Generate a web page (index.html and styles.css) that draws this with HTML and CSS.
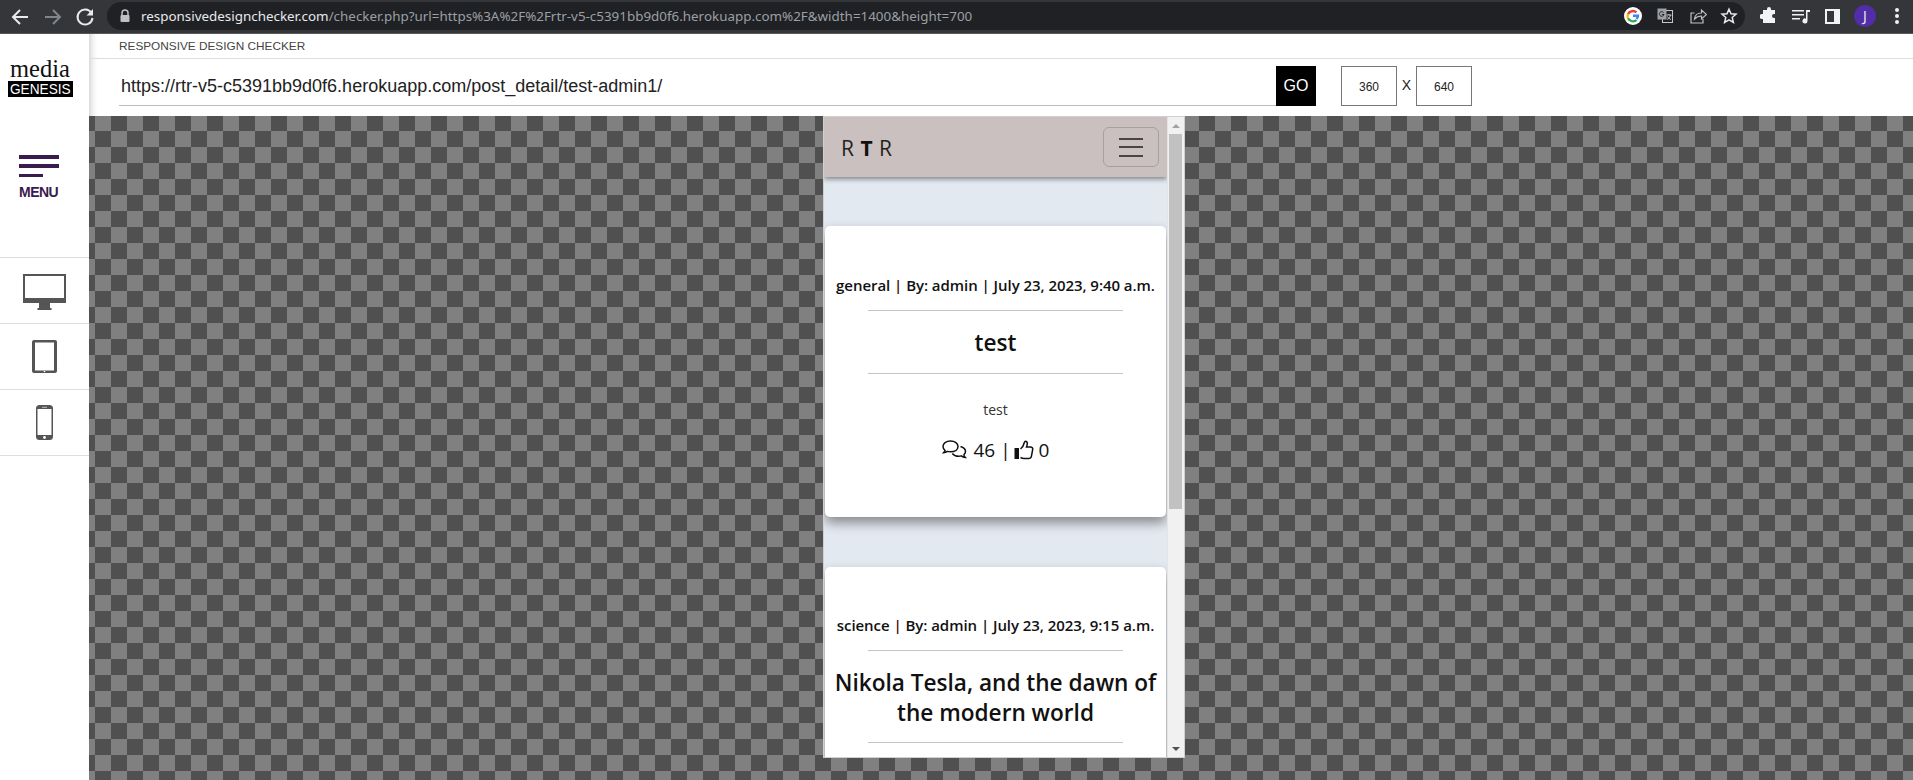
FILE: index.html
```html
<!DOCTYPE html>
<html lang="en">
<head>
<meta charset="utf-8">
<title>Responsive Design Checker</title>
<link rel="stylesheet" href="styles.css">
</head>
<body>
<header class="chrome">
  <svg class="nav-ico" width="24" height="24" viewBox="0 0 24 24"><path d="M20 12H6M12 5l-7 7 7 7" fill="none" stroke="#e8eaed" stroke-width="2"/></svg>
  <svg class="nav-ico fwd" width="24" height="24" viewBox="0 0 24 24"><path d="M4 12h14M12 5l7 7-7 7" fill="none" stroke="#80868b" stroke-width="2"/></svg>
  <svg class="nav-ico rel" width="24" height="24" viewBox="0 0 24 24"><path d="M18.4 8A7.5 7.5 0 1 0 19.5 13" fill="none" stroke="#e8eaed" stroke-width="2"/><path d="M20 4v6.500h-6.500z" fill="#e8eaed"/></svg>
  <div class="omnibox">
    <svg class="lock" width="12" height="14" viewBox="0 0 12 14"><path d="M3 6V4a3 3 0 0 1 6 0v2" fill="none" stroke="#bdc1c6" stroke-width="1.500"/><rect x="1.500" y="6" width="9" height="7" rx="1" fill="#bdc1c6"/></svg>
    <div class="url"><span class="host">responsivedesignchecker.com</span>/checker.php?url=https%3A%2F%2Frtr-v5-c5391bb9d0f6.herokuapp.com%2F&amp;width=1400&amp;height=700</div>
    <svg class="omni-ico" width="18" height="18" viewBox="0 0 18 18"><circle cx="9" cy="9" r="9" fill="#fff"/><path d="M9 7.500h6.200a6.300 6.300 0 0 1-1.700 5.300l-2-1.600A3.500 3.500 0 0 0 12.400 10H9z" fill="#4285f4"/><path d="M4.900 10.600a4.300 4.300 0 0 0 6.600 1.600l2 1.600A6.700 6.700 0 0 1 3 11.700z" fill="#34a853"/><path d="M3 6.300l2 1.500a4.300 4.300 0 0 0-.1 2.800L3 11.700a6.700 6.700 0 0 1 0-5.400z" fill="#fbbc05"/><path d="M3 6.300a6.700 6.700 0 0 1 10.300-1.800l-1.800 1.700A4.300 4.300 0 0 0 5 7.800z" fill="#ea4335"/></svg>
    <svg class="omni-ico tr" width="16" height="16" viewBox="0 0 16 16"><rect x="5.500" y="2.500" width="10" height="12" fill="#202124" stroke="#c4c7c5"/><rect x="0.500" y="0.500" width="9" height="11" fill="#9aa0a6"/><path d="M6.500 4.500a2.300 2.300 0 1 0 .5 2H5" fill="none" stroke="#202124"/><path d="M9.500 7h5M12 6v1M13.500 7c-.5 2-2 4-3.500 4.500M10.500 8.500c.5 1.200 2 2.500 3.500 3" fill="none" stroke="#e8eaed" stroke-width=".8"/></svg>
    <svg class="omni-ico sh" width="18" height="18" viewBox="0 0 18 18"><path d="M5.500 6H2v10h12v-4" fill="none" stroke="#bdc1c6" stroke-width="1.200"/><path d="M5.500 12c.4-4 3-6 7-6V3l5 4.500-5 4.500V9c-3 0-5 .8-7 3z" fill="none" stroke="#bdc1c6" stroke-width="1.200"/></svg>
    <svg class="omni-ico st" width="18" height="18" viewBox="0 0 18 18"><path d="M9 2.200l2 4.600 5 .4-3.800 3.300 1.200 4.900L9 12.800l-4.400 2.600 1.200-4.900L2 7.200l5-.4z" fill="none" stroke="#e8eaed" stroke-width="1.500"/></svg>
  </div>
  <svg class="tool-ico t1" width="18" height="18" viewBox="0 0 18 18"><path d="M7 2a2 2 0 0 1 4 0v1h4v4h-1a2 2 0 0 0 0 4h1v5H3v-4H2a2.500 2.500 0 0 1 0-5h1V3h4z" fill="#f1f3f4"/></svg>
  <svg class="tool-ico t2" width="18" height="16" viewBox="0 0 18 16"><path d="M0 2h12v1.600H0zM0 6h12v1.600H0zM0 10h8v1.600H0z" fill="#f1f3f4"/><path d="M14 2h4v2h-2.500v9a2.500 2.500 0 1 1-1.500-2.300z" fill="#f1f3f4"/></svg>
  <svg class="tool-ico t3" width="15" height="15" viewBox="0 0 15 15"><path d="M0 0h15v15H0z" fill="#f1f3f4"/><path d="M2 2h7v11H2z" fill="#35363a"/></svg>
  <div class="avatar">J</div>
  <svg class="tool-ico t4" width="4" height="16" viewBox="0 0 4 16"><circle cx="2" cy="2" r="2" fill="#f1f3f4"/><circle cx="2" cy="8" r="2" fill="#f1f3f4"/><circle cx="2" cy="14" r="2" fill="#f1f3f4"/></svg>
</header>

<div class="app">
  <aside class="sidebar">
    <div class="side-top">
      <div class="logo">
        <div class="logo-media">media</div>
        <div class="logo-gen"><span>GENESIS</span></div>
      </div>
      <div class="burger">
        <span class="bar"></span><span class="bar"></span><span class="bar short"></span>
      </div>
      <div class="menu-label">MENU</div>
    </div>
    <div class="device">
      <svg class="desktop" width="43" height="36" viewBox="0 0 43 36"><path d="M0 0h43v29H27v5h1.500v2h-14v-2H16v-5H0z" fill="#555"/><rect x="2" y="2" width="39" height="22" fill="#fff"/></svg>
    </div>
    <div class="device">
      <svg width="25" height="33" viewBox="0 0 25 33"><rect width="25" height="33" rx="2" fill="#555"/><rect x="3" y="2.500" width="19" height="28" fill="#fff"/><circle cx="12.500" cy="31.500" r=".8" fill="#fff"/></svg>
    </div>
    <div class="device">
      <svg width="17" height="35" viewBox="0 0 17 35"><rect width="17" height="35" rx="3.500" fill="#555"/><rect x="1.500" y="4" width="14" height="26" fill="#fff"/><rect x="6" y="1.800" width="5" height="1" fill="#bbb"/><circle cx="8.500" cy="32.500" r="1.400" fill="#fff"/></svg>
    </div>
  </aside>

  <main class="main">
    <div class="title-row">RESPONSIVE DESIGN CHECKER</div>
    <div class="url-row">
      <div class="url-input">https://rtr-v5-c5391bb9d0f6.herokuapp.com/post_detail/test-admin1/</div>
      <div class="go">GO</div>
      <div class="dim first">360</div>
      <div class="times">X</div>
      <div class="dim">640</div>
    </div>
    <div class="stage">
      <div class="frame">
        <div class="site">
          <nav class="site-nav">
            <div class="brand">R <b>T</b> R</div>
            <div class="toggler"><i></i><i></i><i></i></div>
          </nav>
          <article class="card">
            <p class="meta">general <span class="pipe">|</span> By: admin | July 23, 2023, 9:40 a.m.</p>
            <hr class="rule">
            <h2 class="post-title">test</h2>
            <hr class="rule">
            <p class="excerpt">test</p>
            <div class="counts">
              <svg class="c-ico comments" width="25" height="20" viewBox="0 0 25 20"><path d="M8.500 1C4 1 1 3.500 1 6.500c0 1.500.8 2.800 2 3.800-.2 1-.8 1.700-1.500 2.400 1.500 0 3-.6 4-1.300 1 .3 2 .4 3 .4 4.500 0 7.500-2.300 7.500-5.300S13 1 8.500 1z" fill="none" stroke="#111" stroke-width="1.500"/><path d="M18.500 6.500c2.800.8 5 2.500 5 5 0 1.300-.6 2.300-1.600 3.200.1 1.100.7 2 1.400 2.800-1.500-.1-3-.8-4-1.600-.8.300-1.700.4-2.600.4-3 0-5-1-6.400-2.800" fill="none" stroke="#111" stroke-width="1.500"/></svg>
              <span>46 |</span>
              <svg class="c-ico thumb" width="20" height="20" viewBox="0 0 20 20"><rect x="0.500" y="8" width="4.500" height="11" fill="#111"/><path d="M6.500 9c2-1.500 3-3 3.500-5.500.2-1.200 1-2.500 2.200-2 1.500.6 1.300 3 .3 5.500h4c1.600 0 2.500 1.200 2.200 2.500l-1.300 6.800c-.3 1.400-1.200 2.200-2.700 2.200H10c-1.500 0-2.500-.5-3.500-1" fill="none" stroke="#111" stroke-width="1.500"/></svg>
              <span>0</span>
            </div>
          </article>
          <article class="card second">
            <p class="meta">science <span class="pipe">|</span> By: admin | July 23, 2023, 9:15 a.m.</p>
            <hr class="rule">
            <h2 class="post-title">Nikola Tesla, and the dawn of the modern world</h2>
            <hr class="rule">
          </article>
        </div>
        <div class="scrollbar">
          <div class="sb-btn"><span class="arrow up"></span></div>
          <div class="sb-thumb"></div>
          <div class="sb-space"></div>
          <div class="sb-btn"><span class="arrow down"></span></div>
        </div>
      </div>
    </div>
  </main>
</div>
</body>
</html>
```

FILE: styles.css
```css
* { box-sizing: border-box; }
html, body { margin: 0; height: 100%; }
body {
  width: 1913px;
  height: 780px;
  overflow: hidden;
  background: #fff;
  font-family: "Liberation Sans", Arial, sans-serif;
  display: flex;
  flex-direction: column;
}

/* browser toolbar */
.chrome {
  height: 34px;
  flex: none;
  background: #35363a;
  border-bottom: 1px solid #56575a;
  display: flex;
  align-items: center;
  position: relative;
  padding-left: 8px;
}
.nav-ico { flex: none; }
.nav-ico.fwd { margin-left: 9px; }
.nav-ico.rel { margin-left: 8px; }
.omnibox {
  margin-left: 10px;
  width: 1638px;
  height: 28px;
  margin-top: -1px;
  background: #202124;
  border-radius: 14px;
  display: flex;
  align-items: center;
  padding-left: 12px;
  flex: none;
}
.url {
  margin-left: 10px;
  width: 1483px;
  font: 13.400px "Noto Sans", sans-serif;
  color: #9aa0a6;
  white-space: nowrap;
}
.host { color: #e8eaed; }
.omni-ico { flex: none; }
.omni-ico.tr { margin-left: 15px; }
.omni-ico.sh { margin-left: 16px; }
.omni-ico.st { margin-left: 13px; }
.tool-ico { flex: none; margin-top: -1px; }
.tool-ico.t1 { margin-left: 15px; }
.tool-ico.t2 { margin-left: 14px; }
.tool-ico.t3 { margin-left: 15px; }
.tool-ico.t4 { margin-left: 19px; }
.avatar {
  width: 22px;
  height: 22px;
  margin-left: 14px;
  margin-top: -1px;
  border-radius: 50%;
  background: #512da8;
  color: #e8eaed;
  font: 14px/22px "Noto Sans", sans-serif;
  text-align: center;
  flex: none;
}

/* app */
.app { flex: 1; display: flex; min-height: 0; }
.sidebar { width: 89px; flex: none; background: #fff; }
.side-top {
  height: 224px;
  padding: 25px 0 0 8px;
  border-bottom: 1px solid #dedede;
}
.logo-media {
  font: 24.500px/20px "Liberation Serif", serif;
  color: #111;
  padding-left: 2px;
  width: 65px;
}
.logo-gen {
  width: 65px;
  height: 16px;
  margin-top: 2px;
  background: #000;
  color: #fff;
  font-size: 15px;
  line-height: 16px;
  white-space: nowrap;
  display: flex;
  justify-content: center;
}
.logo-gen span { flex: none; transform: scaleX(.91); }
.burger {
  margin: 58px 0 0 11px;
  display: flex;
  flex-direction: column;
  gap: 5.800px;
}
.bar { display: block; width: 40px; height: 3.500px; background: #3a1a50; }
.bar.short { width: 24px; }
.menu-label {
  margin: 7px 0 0 11px;
  font-size: 14px;
  font-weight: 700;
  letter-spacing: -.5px;
  line-height: 16px;
  color: #3a1a50;
}
.device {
  height: 66px;
  border-bottom: 1px solid #dedede;
  display: flex;
  align-items: center;
  justify-content: center;
}
.desktop { margin-top: 2px; }

/* main */
.main { flex: 1; min-width: 0; display: flex; flex-direction: column; }
.title-row {
  height: 25px;
  padding: 1px 0 0 30px;
  font-size: 11.800px;
  line-height: 23px;
  color: #444;
  border-bottom: 1px solid #dedede;
  box-shadow: inset 8px 0 7px -6px rgba(0,0,0,.2);
  flex: none;
}
.url-row {
  height: 57px;
  flex: none;
  padding: 7px 0 0 30px;
  display: flex;
  align-items: flex-start;
  box-shadow: inset 8px 0 7px -6px rgba(0,0,0,.2);
}
.url-input {
  width: 1157px;
  height: 40px;
  padding-left: 2px;
  font-size: 18px;
  line-height: 41px;
  color: #222;
  border-bottom: 1px solid #bbb;
}
.go {
  width: 40px;
  height: 40px;
  background: #000;
  color: #fff;
  font-size: 16px;
  line-height: 40px;
  text-align: center;
}
.dim {
  width: 56px;
  height: 40px;
  border: 1px solid #777;
  font-size: 12px;
  line-height: 40px;
  text-align: center;
  color: #222;
}
.dim.first { margin-left: 25px; }
.times { width: 19px; font-size: 14px; line-height: 39px; text-align: center; color: #222; }

.stage {
  flex: 1;
  min-height: 0;
  background-image: conic-gradient(#808080 25%, #505050 0 50%, #808080 0 75%, #505050 0);
  background-size: 32px 32px;
  background-position: -10px -1px;
  padding-left: 6px;
  display: flex;
  justify-content: center;
  align-items: flex-start;
}
.frame {
  width: 362px;
  height: 642px;
  border: 1px solid #d0d0d0;
  display: flex;
  overflow: hidden;
  background: #fff;
}

/* framed site */
.site {
  width: 343px;
  flex: none;
  height: 100%;
  overflow: hidden;
  background: #e3e9f0;
  font-family: "Open Sans", "Noto Sans", sans-serif;
  color: #111;
}
.site-nav {
  height: 60px;
  background: #cbc0c0;
  box-shadow: 0 2px 5px rgba(0,0,0,.45);
  display: flex;
  align-items: center;
  justify-content: space-between;
  padding: 0 8px 0 17px;
  position: relative;
}
.brand { font-size: 21px; color: #222; word-spacing: 1px; padding-top: 2px; }
.brand b { color: #111; font-weight: 700; }
.toggler {
  width: 56px;
  height: 40px;
  border: 1px solid #a89f9f;
  border-radius: 6px;
  display: flex;
  flex-direction: column;
  align-items: center;
  justify-content: center;
  gap: 6.500px;
}
.toggler i { display: block; width: 24px; height: 2px; background: #4a4444; }

.card {
  margin: 49px 0 0 1px;
  width: 341px;
  height: 291px;
  padding: 46px 7px 0;
  background: #fff;
  border-radius: 5px;
  box-shadow: 0 6px 12px rgba(0,0,0,.4);
  text-align: center;
}
.card.second { margin-top: 50px; height: 400px; padding-top: 45px; }
.meta {
  margin: 0;
  font-size: 15px;
  line-height: 26px;
  font-weight: 600;
  letter-spacing: -.05px;
  white-space: nowrap;
}
.pipe { color: #3a0808; }
.rule {
  margin: 12px auto 0;
  width: 255px;
  height: 1px;
  border: 0;
  background: #c4c4c4;
}
.post-title {
  margin: 17px -5px 0;
  font-size: 22.600px;
  line-height: 29.500px;
  font-weight: 600;
}
.post-title + .rule { margin-top: 15px; }
.excerpt { margin: 25px 0 0; font-size: 14px; line-height: 21px; color: #333; }
.counts {
  margin-top: 17px;
  font-size: 19px;
  font-weight: 500;
  line-height: 27px;
  display: flex;
  align-items: center;
  justify-content: center;
  gap: 5px;
  color: #111;
}
.c-ico { flex: none; }
.comments { margin-right: 2px; }
.thumb { margin-left: -2px; }

/* scrollbar */
.scrollbar {
  width: 17px;
  flex: none;
  background: #f1f1f1;
  border-left: 1px solid #e4e4e4;
  display: flex;
  flex-direction: column;
}
.sb-btn { height: 17px; display: flex; align-items: center; justify-content: center; flex: none; }
.arrow { width: 0; height: 0; border-left: 4px solid transparent; border-right: 4px solid transparent; }
.arrow.up { border-bottom: 4px solid #a3a3a3; }
.arrow.down { border-top: 4px solid #505050; }
.sb-thumb { height: 375px; margin: 0 2px 0 1px; background: #c1c1c1; flex: none; }
.sb-space { flex: 1; }
```
